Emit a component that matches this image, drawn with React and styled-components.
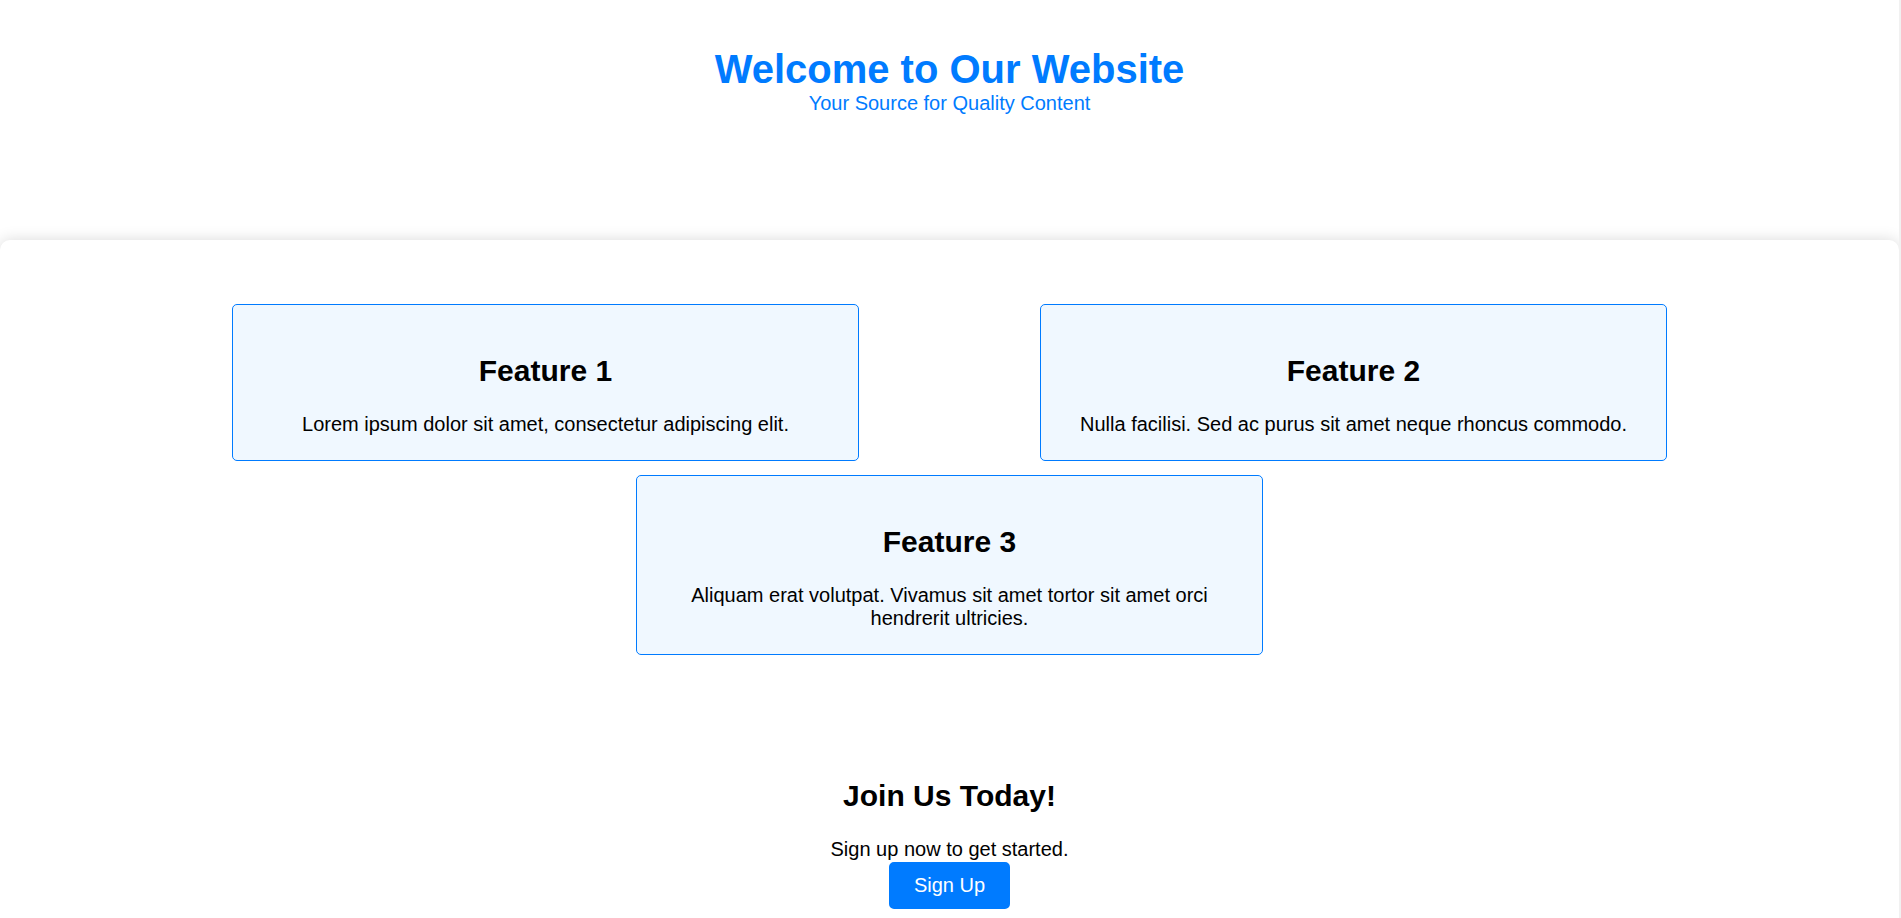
import React from 'react'
import styled, { createGlobalStyle } from 'styled-components'

const GlobalStyle = createGlobalStyle`
  html {
    overflow: hidden;
  }

  body {
    margin: 0;
    border-right: 2px solid #f1f1f1;
    font-family: "Liberation Sans", Arial, sans-serif;
    font-size: 20px;
    color: #000;
    background: #fff;
  }
`;

const Header = styled.header`
  box-sizing: border-box;
  height: 240px;
  padding-top: 46.5px;
  text-align: center;
  color: #007bff;
`;

const Title = styled.h1`
  margin: 0;
  font-size: 2em;
  font-weight: bold;
`;

const Subtitle = styled.p`
  margin: 0;
`;

const Main = styled.main`
  background: #fff;
  border-radius: 10px;
  box-shadow: 0 0 15px rgba(0, 0, 0, 0.15);
  padding: 64px 0 200px;
`;

const Features = styled.section`
  display: flex;
  flex-wrap: wrap;
  justify-content: center;
  column-gap: 181px;
  row-gap: 14px;
`;

const Feature = styled.div`
  box-sizing: border-box;
  width: 627px;
  padding: 24px 20px;
  background: #f0f8ff;
  border: 1px solid #007bff;
  border-radius: 5px;
  text-align: center;
`;

const Heading = styled.h2`
  margin: 0.83em 0;
  font-size: 1.5em;
  font-weight: bold;
`;

const Text = styled.p`
  margin: 0;
`;

const CallToAction = styled.section`
  padding-top: 100px;
  text-align: center;
`;

const Button = styled.button`
  margin-top: 1px;
  padding: 10px 23px;
  background: #007bff;
  color: #fff;
  border: 2px solid #007bff;
  border-radius: 5px;
  font-family: inherit;
  font-size: 20px;
  cursor: pointer;
`;

const features = [
  { title: 'Feature 1', text: 'Lorem ipsum dolor sit amet, consectetur adipiscing elit.' },
  { title: 'Feature 2', text: 'Nulla facilisi. Sed ac purus sit amet neque rhoncus commodo.' },
  { title: 'Feature 3', text: 'Aliquam erat volutpat. Vivamus sit amet tortor sit amet orci hendrerit ultricies.' },
];

const App = () => {
  return (
    <>
      <GlobalStyle />
      <Header>
        <Title>Welcome to Our Website</Title>
        <Subtitle>Your Source for Quality Content</Subtitle>
      </Header>
      <Main>
        <Features>
          {features.map((f) => (
            <Feature key={f.title}>
              <Heading>{f.title}</Heading>
              <Text>{f.text}</Text>
            </Feature>
          ))}
        </Features>
        <CallToAction>
          <Heading>Join Us Today!</Heading>
          <Text>Sign up now to get started.</Text>
          <Button>Sign Up</Button>
        </CallToAction>
      </Main>
    </>
  )
}

export default App
